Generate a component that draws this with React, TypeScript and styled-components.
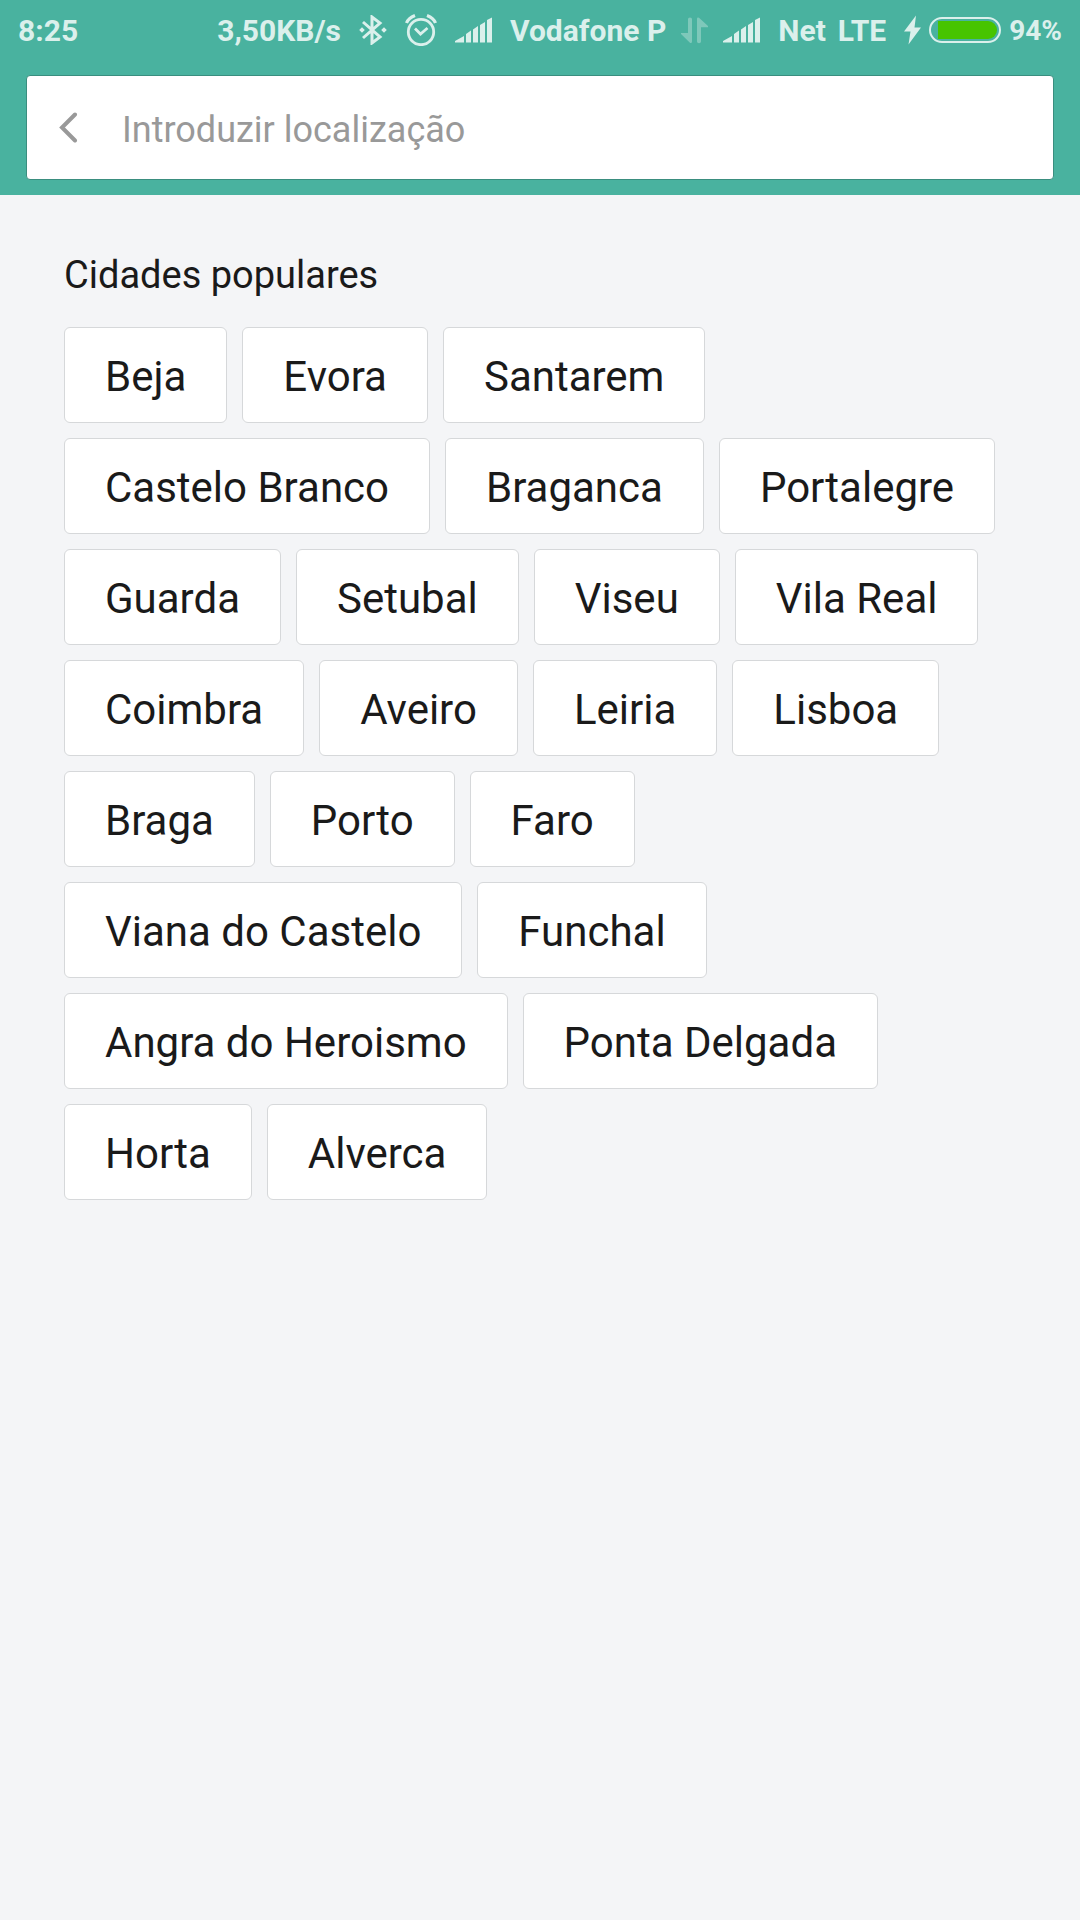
import React, { useState } from 'react';
import styled, { createGlobalStyle } from 'styled-components';

const GlobalStyle = createGlobalStyle`
  *, *::before, *::after { box-sizing: border-box; }
  body {
    margin: 0;
    background: #f4f5f7;
    color: #1a1a1a;
    font-family: Roboto, "Noto Sans", sans-serif;
  }
`;

const Page = styled.div`
  min-height: 100vh;
  background: #f4f5f7;
`;

const Header = styled.header`
  background: #49b29f;
  padding-bottom: 15px;
`;

const StatusBar = styled.div`
  display: flex;
  align-items: center;
  justify-content: space-between;
  height: 60px;
  padding: 0 18px;
  color: #dbf0ec;
  font-size: 30px;
  line-height: 36px;
  font-weight: 700;
  white-space: nowrap;

  span { padding-top: 2px; }
`;

const BatteryLevel = styled.span`
  font-size: 28px;
`;

const StatusGroup = styled.div<{ $gap: number }>`
  display: flex;
  align-items: center;
  gap: ${({ $gap }) => $gap}px;

  svg { display: block; flex: none; }
`;

const SearchForm = styled.form`
  display: flex;
  align-items: center;
  height: 105px;
  margin: 15px 26px 0;
  background: #fff;
  border: 1px solid #3a8e7f;
  border-radius: 4px;
`;

const BackButton = styled.button`
  display: flex;
  flex: none;
  align-items: center;
  height: 100%;
  width: 95px;
  padding: 0 0 0 32px;
  border: 0;
  background: none;
  color: #999;
`;

const SearchInput = styled.input`
  flex: 1;
  min-width: 0;
  height: 100%;
  padding: 4px 24px 0 0;
  border: 0;
  outline: 0;
  background: none;
  color: #1a1a1a;
  font: 400 36px Roboto, "Noto Sans", sans-serif;

  &::placeholder { color: #999; opacity: 1; }
`;

const Content = styled.main`
  padding: 56px 64px;
`;

const Heading = styled.h1`
  margin: 0 0 28px;
  font-size: 38px;
  line-height: 48px;
  font-weight: 400;
`;

const CityList = styled.ul`
  display: flex;
  flex-wrap: wrap;
  gap: 15px;
  margin: 0;
  padding: 0;
  list-style: none;
`;

const CityButton = styled.button`
  display: block;
  height: 96px;
  padding: 2px 40px 0;
  border: 1px solid #d6d8da;
  border-radius: 6px;
  background: #fff;
  color: #1a1a1a;
  font: 400 42px Roboto, "Noto Sans", sans-serif;
  white-space: nowrap;
`;

const BluetoothIcon = () => (
  <svg width="28" height="30" viewBox="0 0 28 30" fill="none" stroke="currentColor" strokeWidth="3">
    <path d="M4 7 L21 22 L13 28 V2 L21 8 L4 23" />
    <path d="M3 12.2 L5.8 15 L3 17.8 L.2 15Z M25 12.2 L27.8 15 L25 17.8 L22.2 15Z" fill="currentColor" stroke="none" />
  </svg>
);

const AlarmIcon = () => (
  <svg width="32" height="32" viewBox="0 0 32 32" fill="none" stroke="currentColor" strokeWidth="2.8">
    <circle cx="16" cy="18" r="12.7" />
    <path d="M10 14.5 L15.5 20 L22.5 14" />
    <path d="M1.5 9 Q3.5 4 10 1.5 M22 1.5 Q28.5 4 30.5 9" strokeWidth="3.2" />
  </svg>
);

const SignalIcon = () => (
  <svg width="37" height="26" viewBox="0 0 37 26" fill="currentColor">
    <path d="M0 25.5 V24 L9 19 V25.5Z M11 25.5 V17 L16 13.5 V25.5Z M18 25.5 V12.5 L23 9 V25.5Z M25 25.5 V8 L30 5 V25.5Z M32 25.5 V3 L37 .5 V25.5Z" />
  </svg>
);

const DataIcon = () => (
  <svg width="27" height="27" viewBox="0 0 27 27" fill="currentColor" opacity=".36">
    <path d="M7 2 Q7 .5 9 .5 Q11 .5 11 2 V24.5 Q11 26.5 9.2 26 L0 17 V16 H7Z M16 2 Q16 0 18 .8 L27 9 V10.3 H20 V24.5 Q20 26.3 18 26.3 Q16 26.3 16 24.5Z" />
  </svg>
);

const BoltIcon = () => (
  <svg width="17" height="30" viewBox="0 0 17 30" fill="currentColor">
    <path d="M12 .5 L0 16.5 H6.5 L4.5 29.5 L17 12.5 H10.5Z" />
  </svg>
);

const BatteryIcon = () => (
  <svg width="72" height="26" viewBox="0 0 72 26">
    <rect x="1" y="1" width="70" height="24" rx="12" fill="none" stroke="currentColor" strokeWidth="2" />
    <path d="M9 4 H59 A9 9 0 0 1 59 22 H9Z" fill="#47c400" />
  </svg>
);

const ChevronIcon = () => (
  <svg width="19" height="31" viewBox="0 0 19 31" fill="none" stroke="currentColor" strokeWidth="4" strokeLinecap="round">
    <path d="M16 2.5 L3 15.5 L16 28.5" />
  </svg>
);

const cities = [
  'Beja', 'Evora', 'Santarem', 'Castelo Branco', 'Braganca', 'Portalegre',
  'Guarda', 'Setubal', 'Viseu', 'Vila Real', 'Coimbra', 'Aveiro', 'Leiria',
  'Lisboa', 'Braga', 'Porto', 'Faro', 'Viana do Castelo', 'Funchal',
  'Angra do Heroismo', 'Ponta Delgada', 'Horta', 'Alverca',
];

export default function App() {
  const [location, setLocation] = useState('');

  return (
    <Page>
      <GlobalStyle />
      <Header>
        <StatusBar>
          <span>8:25</span>
          <StatusGroup $gap={18}>
            <span>3,50KB/s</span>
            <BluetoothIcon />
            <AlarmIcon />
            <SignalIcon />
            <StatusGroup $gap={15}>
              <span>Vodafone P</span>
              <DataIcon />
              <SignalIcon />
            </StatusGroup>
            <StatusGroup $gap={12}>
              <span>Net</span>
              <span>LTE</span>
            </StatusGroup>
            <StatusGroup $gap={8}>
              <BoltIcon />
              <BatteryIcon />
              <BatteryLevel>94%</BatteryLevel>
            </StatusGroup>
          </StatusGroup>
        </StatusBar>
        <SearchForm onSubmit={(event) => event.preventDefault()}>
          <BackButton type="button" aria-label="Voltar">
            <ChevronIcon />
          </BackButton>
          <SearchInput
            type="text"
            aria-label="Introduzir localização"
            placeholder="Introduzir localização"
            value={location}
            onChange={(event) => setLocation(event.target.value)}
          />
        </SearchForm>
      </Header>
      <Content>
        <Heading>Cidades populares</Heading>
        <CityList>
          {cities.map((city) => (
            <li key={city}>
              <CityButton type="button" onClick={() => setLocation(city)}>{city}</CityButton>
            </li>
          ))}
        </CityList>
      </Content>
    </Page>
  );
}
